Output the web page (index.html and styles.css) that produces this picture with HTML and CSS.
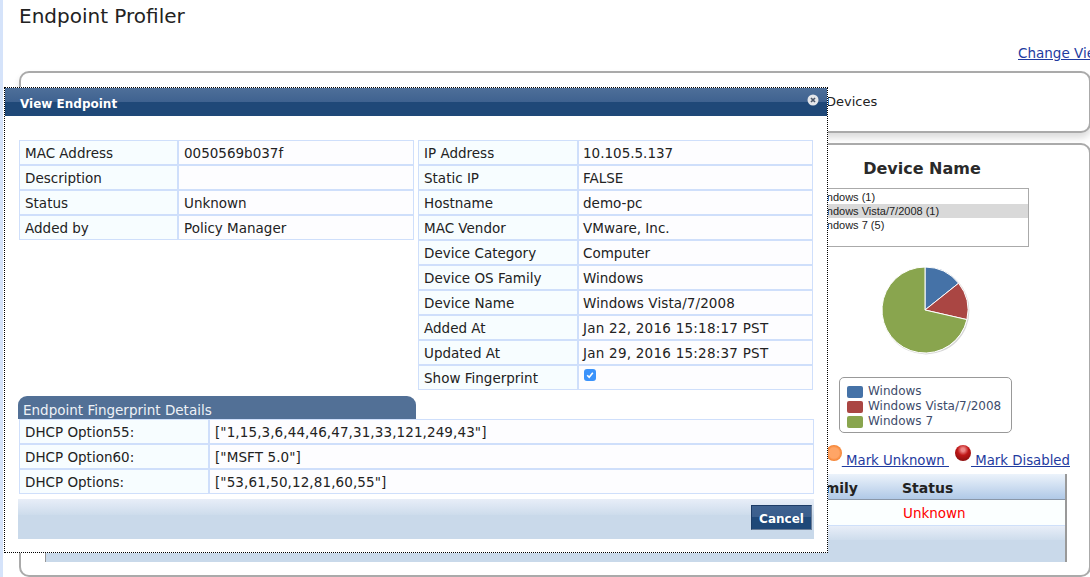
FILE: index.html
```html
<!DOCTYPE html>
<html lang="en">
<head>
<meta charset="utf-8">
<title>Endpoint Profiler</title>
<link rel="stylesheet" href="styles.css">
</head>
<body>
<div class="page">
  <div class="rail"></div>
  <main class="main">
    <h1 class="title">Endpoint Profiler</h1>
    <div class="view-link"><a href="#">Change View</a></div>
    <section class="panel panel-top"><span class="top-text">Devices</span></section>
    <section class="panel panel-body">
      <div class="chart">
        <h2 class="chart-title">Device Name</h2>
        <ul class="listbox">
          <li>Windows (1)</li>
          <li class="selected">Windows Vista/7/2008 (1)</li>
          <li>Windows 7 (5)</li>
        </ul>
        <svg class="pie" width="100" height="100" viewBox="0 0 100 100">
          <circle cx="50.8" cy="50.8" r="43.6" fill="#bbb" opacity=".6"/>
          <circle cx="50" cy="50" r="43.4" fill="#fff"/>
          <path d="M50 50V7A43 43 0 0 1 83.6 23.2Z" fill="#4572a7" stroke="#fff"/>
          <path d="M50 50L83.6 23.2A43 43 0 0 1 91.9 59.6Z" fill="#aa4643" stroke="#fff"/>
          <path d="M50 50L91.9 59.6A43 43 0 1 1 50 7Z" fill="#89a54e" stroke="#fff"/>
        </svg>
        <div class="legend">
          <div class="legend-row"><i class="swatch swatch-blue"></i>Windows</div>
          <div class="legend-row"><i class="swatch swatch-red"></i>Windows Vista/7/2008</div>
          <div class="legend-row"><i class="swatch swatch-green"></i>Windows 7</div>
        </div>
      </div>
      <div class="marks">
        <i class="orb orb-orange"></i><a href="#">&nbsp;Mark Unknown&nbsp;</a>
        <i class="orb orb-red"></i><a href="#">&nbsp;Mark Disabled</a>
      </div>
      <div class="grid-table">
        <div class="grid-head"><span class="col-family">Device OS Family</span><span class="col-status">Status</span></div>
        <div class="grid-row"><span class="col-family"></span><span class="col-status unknown">Unknown</span></div>
        <div class="bar grid-foot"></div>
      </div>
    </section>
  </main>
</div>

<div class="modal">
  <header class="modal-head">
    <span>View Endpoint</span>
    <svg class="close" width="12" height="12" viewBox="0 0 12 12">
      <circle cx="6" cy="6" r="5.5" fill="#e4e6ea"/>
      <path d="M4 4l4 4M8 4l-4 4" stroke="#4a5568" stroke-width="1.6"/>
    </svg>
  </header>
  <div class="modal-body">
    <div class="columns">
      <table class="info info-left">
        <tr><th>MAC Address</th><td>0050569b037f</td></tr>
        <tr><th>Description</th><td></td></tr>
        <tr><th>Status</th><td>Unknown</td></tr>
        <tr><th>Added by</th><td>Policy Manager</td></tr>
      </table>
      <table class="info info-right">
        <tr><th>IP Address</th><td>10.105.5.137</td></tr>
        <tr><th>Static IP</th><td>FALSE</td></tr>
        <tr><th>Hostname</th><td>demo-pc</td></tr>
        <tr><th>MAC Vendor</th><td>VMware, Inc.</td></tr>
        <tr><th>Device Category</th><td>Computer</td></tr>
        <tr><th>Device OS Family</th><td>Windows</td></tr>
        <tr><th>Device Name</th><td class="loose">Windows Vista/7/2008</td></tr>
        <tr><th>Added At</th><td class="date">Jan 22, 2016 15:18:17 PST</td></tr>
        <tr><th>Updated At</th><td class="date">Jan 29, 2016 15:28:37 PST</td></tr>
        <tr><th>Show Fingerprint</th><td><span class="check"><svg width="12" height="12" viewBox="0 0 12 12"><path d="M3.2 6.3l2 2 3.6-4.6" fill="none" stroke="#fff" stroke-width="1.6"/></svg></span></td></tr>
      </table>
    </div>
    <div class="tab-title">Endpoint Fingerprint Details</div>
    <table class="info wide">
      <tr><th>DHCP Option55:</th><td class="loose">["1,15,3,6,44,46,47,31,33,121,249,43"]</td></tr>
      <tr><th>DHCP Option60:</th><td class="loose">["MSFT 5.0"]</td></tr>
      <tr><th>DHCP Options:</th><td class="loose">["53,61,50,12,81,60,55"]</td></tr>
    </table>
    <div class="bar modal-foot"><button class="cancel" type="button">Cancel</button></div>
  </div>
</div>
</body>
</html>
```
FILE: styles.css
```css
* { box-sizing: border-box; }
html, body { margin: 0; height: 577px; overflow: hidden; background: #fff; }
body { font-family: "DejaVu Sans", Verdana, sans-serif; font-size: 13.5px; color: #222; position: relative; }
a { color: #1f3ba0; }

.page { display: flex; height: 577px; }
.rail { width: 3px; flex: none; background: #d5e3fa; }
.main { flex: 1; min-width: 0; padding-left: 16px; display: flex; flex-direction: column; }
.title { margin: 4px 0 0; font-size: 20px; line-height: 24px; font-weight: 400; color: #222; }
.view-link { margin-top: 15px; height: 28px; font-size: 13.5px; line-height: 20px; white-space: nowrap; padding-left: 999px; }

.panel { border: 2px solid #aaa; border-radius: 10px; background: #fff; width: 1072px; flex: none; }
.panel-top { height: 62px; display: flex; align-items: center; padding: 0 0 2px 805px; font-size: 13px; box-shadow: 0 5px 7px #ddd; }
.panel-body { height: 434px; margin-top: 10px; padding: 13px 0 0 24px; position: relative; }

.chart { margin-left: 770px; width: 220px; display: flex; flex-direction: column; }
.chart-title { margin: 0; width: 214px; text-align: center; font-size: 16px; line-height: 22px; font-weight: 700; color: #2a2a2a; }
.listbox { list-style: none; margin: 8px 0 0 -2px; padding: 1px 0 0; width: 216px; height: 59px; border: 1px solid #aaa; font-family: "Liberation Sans", Arial, sans-serif; font-size: 11px; line-height: 14px; color: #222; }
.selected { background: #d9d9d9; }
.pie { display: block; margin: 13px 0 0 60px; }
.legend { margin: 17px 0 0 24px; width: 173px; height: 56px; border: 1px solid #999; border-radius: 5px; padding: 6px 0 0 7px; font-size: 12px; line-height: 15px; color: #3e4c6b; }
.legend-row { display: flex; align-items: center; white-space: nowrap; }
.swatch { width: 16px; height: 12px; border-radius: 2px; margin-right: 5px; flex: none; }
.swatch-blue { background: #4572a7; }
.swatch-red { background: #aa4643; }
.swatch-green { background: #89a54e; }

.marks { height: 41px; padding-top: 18px; display: flex; justify-content: flex-end; align-items: flex-start; padding-right: 19px; font-size: 13.3px; line-height: 20px; white-space: pre; }
.orb { width: 16px; height: 16px; border-radius: 50%; flex: none; margin-top: -6px; }
.orb-orange { background: radial-gradient(circle at 50% 50%, #ffa566 0 45%, #f27a25 75%, #f9c9a4 100%); }
.orb-red { margin-left: 6px; background: radial-gradient(circle at 50% 30%, #e88 0 12%, #c01818 40%, #8e0f0f 80%, #e7c0c0 100%); }

.grid-table { width: 1022px; height: 88px; border-left: 1px solid #999; border-right: 2px solid #999; }
.grid-head { height: 26px; display: flex; align-items: center; padding-top: 2px; font-weight: 700; font-size: 14px; background: linear-gradient(#ecf3fb, #b0c9e7); border-bottom: 1px solid #8a97a8; }
.grid-row { height: 26px; display: flex; align-items: center; font-size: 13.5px; background: #fbffff; border-bottom: 1px solid #cfe0fa; }
.col-family { width: 856px; text-align: right; padding-right: 44px; white-space: nowrap; }
.unknown { color: #f00; margin-left: 1px; }
.bar { background: linear-gradient(#e8eef8, #cddcec 40%, #c9d9ea 40%); }
.grid-foot { height: 36px; }

.modal { position: absolute; left: 4px; top: 87px; width: 824px; height: 466px; background: #fff; border: 1px dotted #000; padding: 0; }
.modal-head { height: 28px; background: linear-gradient(#4e6f99 0, #3f6290 50%, #1f4878 50%); color: #fff; font-size: 12px; font-weight: 700; line-height: 33px; padding-left: 15px; display: flex; justify-content: space-between; }
.close { margin: 6px 8px 0 0; }
.modal-body { padding: 24px 13px 0 13px; }
.columns { display: flex; justify-content: space-between; align-items: flex-start; height: 256px; padding: 0 1px; }
.info { border-collapse: separate; border-spacing: 0; font-size: 13.5px; table-layout: fixed; width: 395px; }
.info th, .info td { height: 25px; padding: 0 0 0 5px; border: 1px solid #cfdffb; font-weight: 400; text-align: left; vertical-align: middle; white-space: nowrap; color: #222; }
.info th { background: #f7fdff; }
.info td { background: #fdfdff; }
.info-left th { width: 159px; }
.info-right th { width: 160px; }
.info-right td { padding-left: 4px; }
.info .loose { letter-spacing: .1px; }
.info .date { letter-spacing: .24px; }
.check { display: inline-flex; width: 12px; height: 12px; border-radius: 3px; background: #3b93fb; margin: 0 0 5px 1px; vertical-align: middle; }
.tab-title { width: 398px; height: 23px; background: #527096; border-radius: 9px 9px 0 0; color: #eef2f7; font-size: 13.5px; line-height: 28px; padding-left: 5px; overflow: hidden; }
.wide { width: 795px; margin-left: 1px; }
.wide th { width: 190px; }
.modal-foot { width: 796px; height: 40px; margin-top: 5px; display: flex; justify-content: flex-end; padding: 6px 2px 0 0; }
.cancel { width: 61px; height: 25px; padding: 2px 0 0; border: 1px solid #7a8ca5; border-color: #1d3c66 #6d7f99 #6d7f99 #1d3c66; background: linear-gradient(#3f6290 0, #3a5e8d 50%, #1f4878 50%); color: #fff; font-family: "DejaVu Sans", Verdana, sans-serif; font-size: 12px; font-weight: 700; }
```
